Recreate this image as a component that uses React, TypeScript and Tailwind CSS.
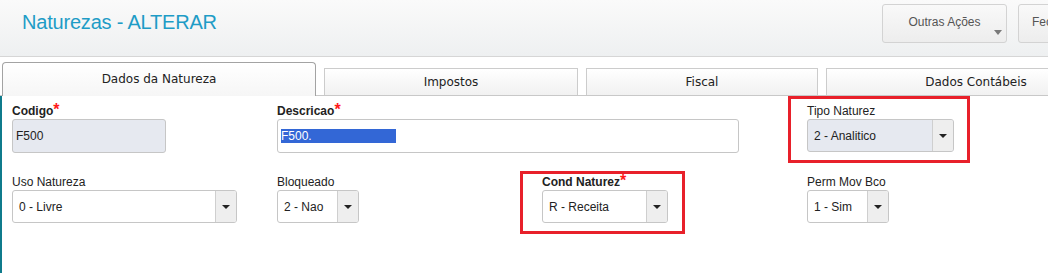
import React from 'react';

const Caret: React.FC = () => (
  <span className="w-0 h-0 border-l-[4px] border-r-[4px] border-t-[4px] border-l-transparent border-r-transparent border-t-[#222]"></span>
);

type SelectProps = { value: string; width: string; tinted?: boolean };

const Select: React.FC<SelectProps> = ({ value, width, tinted }) => (
  <div
    className={`${width} h-[33px] flex border border-[#c6c6c6] rounded-[3px] overflow-hidden ${
      tinted ? 'bg-[#e6e9f0]' : 'bg-white'
    }`}
  >
    <div className="flex-1 flex items-center pl-[6px] text-[12px] text-[#222] whitespace-nowrap">{value}</div>
    <div className="w-[21px] flex items-center justify-center bg-[#eeeeee] border-l border-[#cfcfcf]">
      <Caret />
    </div>
  </div>
);

const Label: React.FC<{ text: string; required?: boolean }> = ({ text, required }) => (
  <div className={`h-[15px] leading-[15px] text-[12px] text-[#222] whitespace-nowrap ${required ? 'font-bold' : ''}`}>
    {text}
    {required && <span className="text-[#ff1a1a] text-[16px] font-bold leading-[0]">*</span>}
  </div>
);

const App: React.FC = () => {
  const tabs = [
    { title: 'Impostos', width: 'w-[254px]' },
    { title: 'Fiscal', width: 'w-[232px]' },
    { title: 'Dados Contábeis', width: 'w-[300px]' },
  ];

  return (
    <div className="w-[1048px] h-[273px] overflow-hidden bg-white flex flex-col font-['Liberation_Sans',Arial,sans-serif]">
      {/* Header */}
      <div className="h-[57px] shrink-0 flex justify-between border-b border-[#d6d6d6] bg-gradient-to-b from-[#fafafa] to-[#eef0f1]">
        <h1 className="pl-[22px] pt-[7px] text-[20px] text-[#1e9cc6] tracking-[-0.2px]">Naturezas - ALTERAR</h1>
        <div className="flex gap-[11px] pt-[4px] shrink-0 w-[166px]">
          <button className="relative w-[125px] h-[39px] shrink-0 rounded-[3px] border border-[#d3d3d3] bg-gradient-to-b from-[#f9f9f9] to-[#ededed] text-[12px] text-[#555] pb-[3px]">
            Outras Ações
            <span className="absolute right-[4px] bottom-[7px] w-0 h-0 border-l-[4px] border-r-[4px] border-t-[5px] border-l-transparent border-r-transparent border-t-[#7a7a7a]"></span>
          </button>
          <button className="w-[125px] h-[39px] shrink-0 rounded-[3px] border border-[#d3d3d3] bg-gradient-to-b from-[#f9f9f9] to-[#ededed] text-[12px] text-[#555] text-left pl-[13px] pb-[3px]">
            Fechar
          </button>
        </div>
      </div>

      {/* Tabs */}
      <div className="h-[39px] shrink-0 flex items-end pl-[2px] gap-[8px] font-['DejaVu_Sans',sans-serif] text-[12px] text-[#222] border-b border-[#c8c8c8] bg-white">
        <div className="w-[314px] h-[34px] -mb-px shrink-0 flex items-start justify-center pt-[7px] border border-b-0 border-[#a3a3a3] rounded-t-[4px] bg-gradient-to-b from-white to-[#f6f6f6]">
          <span>Dados da Natureza</span>
        </div>
        {tabs.map((tab) => (
          <div
            key={tab.title}
            className={`${tab.width} h-[27px] shrink-0 flex items-center justify-center border border-b-0 border-[#cccccc] bg-gradient-to-b from-white to-[#f1f1f1]`}
          >
            <span>{tab.title}</span>
          </div>
        ))}
      </div>

      {/* Form */}
      <div className="flex-1 border-l-2 border-[#0f7b8c] pl-[10px] pt-[8px]">
        <div className="grid grid-cols-[265px_265px_265px_200px] gap-y-[22px]">
          <div>
            <Label text="Codigo" required />
            <div className="w-[154px] h-[34px] flex items-center pl-[3px] bg-[#e6e9f0] border border-[#c6c6c6] rounded-[3px] text-[12px] text-[#222]">
              F500
            </div>
          </div>
          <div className="col-span-2">
            <Label text="Descricao" required />
            <div className="w-[462px] h-[34px] flex items-center pl-[3px] bg-white border border-[#c6c6c6] rounded-[3px] text-[12px]">
              <span className="inline-block w-[115px] h-[14px] leading-[14px] bg-[#3367d6] text-white">F500.</span>
            </div>
          </div>
          <div className="relative w-[147px]">
            <div className="absolute -left-[19px] -right-[16px] -top-[8px] -bottom-[10px] border-[3px] border-[#e8202a]"></div>
            <Label text="Tipo Naturez" />
            <Select value="2 - Analitico" width="w-[147px]" tinted />
          </div>

          <div>
            <Label text="Uso Natureza" />
            <Select value="0 - Livre" width="w-[225px]" />
          </div>
          <div>
            <Label text="Bloqueado" />
            <Select value="2 - Nao" width="w-[82px]" />
          </div>
          <div className="relative w-[126px]">
            <div className="absolute -left-[22px] -right-[17px] -top-[4px] -bottom-[11px] border-[3px] border-[#e8202a]"></div>
            <Label text="Cond Naturez" required />
            <Select value="R - Receita" width="w-[126px]" />
          </div>
          <div>
            <Label text="Perm Mov Bco" />
            <Select value="1 - Sim" width="w-[82px]" />
          </div>
        </div>
      </div>
    </div>
  );
};

export default App;
